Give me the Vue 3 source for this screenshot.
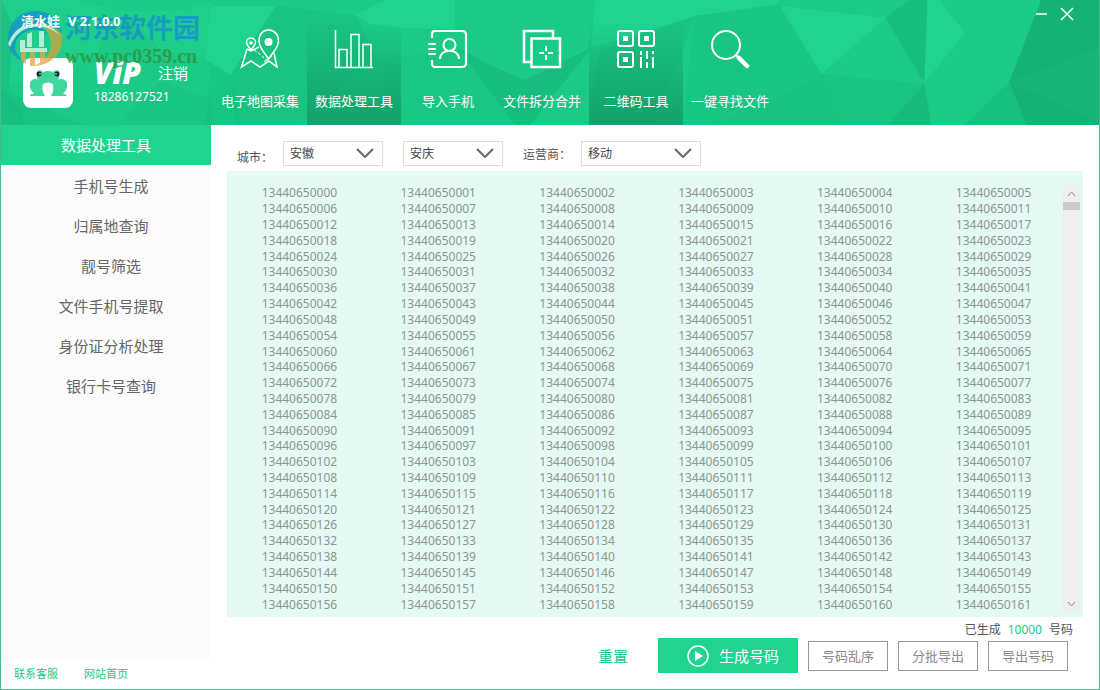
<script setup>
import { ref } from 'vue'

const tabs = [
  { id: 'map', label: '电子地图采集' },
  { id: 'chart', label: '数据处理工具', shaded: true },
  { id: 'contact', label: '导入手机' },
  { id: 'split', label: '文件拆分合并' },
  { id: 'qr', label: '二维码工具', shaded: true },
  { id: 'search', label: '一键寻找文件' },
]
const menu = ['手机号生成', '归属地查询', '靓号筛选', '文件手机号提取', '身份证分析处理', '银行卡号查询']
const province = ref('安徽')
const city = ref('安庆')
const carrier = ref('移动')
const rows = Array.from({ length: 27 }, (_, r) =>
  Array.from({ length: 6 }, (_, c) => 13440650000 + r * 6 + c)
)
</script>

<template>
  <div class="window">
    <header class="header">
      <svg class="facets" viewBox="0 0 1100 125" preserveAspectRatio="none" aria-hidden="true">
        <rect width="1100" height="125" fill="#1bca86" />
        <g fill="#20d490">
          <path d="M0 0H75L125 12 90 60 0 88Z" opacity=".5" />
          <path d="M125 12 185 10 212 0V60L160 50Z" opacity=".5" />
          <path d="M210 6 275 6 230 75 205 60Z" />
          <path d="M355 15 385 0H455V30L405 28 370 24Z" />
          <path d="M595 0H780L776 5 695 16 591 48Z" />
          <path d="M780 6 886 18 822 74Z" />
          <path d="M928 0H940L966 33 925 83Z" />
        </g>
        <g fill="#17b97c">
          <path d="M0 0 12 25 8 90 0 88Z" opacity=".6" />
          <path d="M0 88 20 108 24 125H0Z" opacity=".7" />
          <path d="M24 125 0 88 83 125Z" opacity=".4" />
          <path d="M118 125 160 80 212 100V125Z" opacity=".3" />
          <path d="M275 6 355 15 375 55 300 125H235L230 75Z" opacity=".4" />
          <path d="M210 62 230 75 240 125H205Z" opacity=".3" />
          <path d="M458 48 490 65 525 80 591 48 550 100 530 125H515Z" opacity=".8" />
          <path d="M458 48 515 125H400L375 60Z" opacity=".2" />
          <path d="M695 16 776 5 780 6 822 74 780 98 712 125H683Z" opacity=".3" />
          <path d="M695 16 680 60 650 125H589L600 50Z" opacity=".4" />
          <path d="M822 74 780 98 712 125H842Z" opacity=".5" />
          <path d="M822 74 925 84 888 125H842Z" opacity=".4" />
          <path d="M925 84 888 125H932Z" />
          <path d="M886 18 910 0H928L925 83Z" opacity=".8" />
          <path d="M1010 82 965 125H1027Z" opacity=".6" />
        </g>
        <path d="M1042 0H1100V125H1027L1010 82Z" fill="#16b275" />
        <path d="M1010 82 1100 48V122Z" fill="#17b678" />
      </svg>

      <div class="account">
        <svg class="avatar" viewBox="0 0 50 50" aria-hidden="true">
          <rect width="50" height="50" rx="8" fill="#fff" />
          <g fill="#3fd79b">
            <path d="M14 17C13 12 18 11 20 14Q25 12 30 14C33 11 38 12 36 17Q37 25 25 25Q13 25 14 17Z" />
            <path d="M17 22Q9 19 7 25Q6 31 11 36H8L7 38H19L20 30ZM34 22Q42 19 44 25Q45 31 40 36H42L44 38H32L30 30Z" />
            <path d="M16 23H35L33 38H17Z" />
          </g>
          <path d="M20 26Q25 23 30 26Q31 33 28 38H22Q18 32 20 26Z" fill="#fff" />
          <circle cx="16" cy="16" r="2.500" fill="#223" />
          <circle cx="34" cy="16" r="2.500" fill="#223" />
          <circle cx="17" cy="16" r=".8" fill="#fff" />
          <circle cx="33" cy="16" r=".8" fill="#fff" />
          <path d="M23 17v1M27 17v1" stroke="#269c6c" />
        </svg>
        <div class="identity">
          <div class="rank"><span class="vip">ViP</span><button class="logout">注销</button></div>
          <div class="phone">18286127521</div>
        </div>
      </div>

      <div class="stamp" aria-hidden="true">
        <svg class="orb" viewBox="0 0 60 60">
          <path d="M3 30C5 12 16 3 31 3C46 3 55 12 57 25C48 16 37 13 27 16C15 19 9 26 6 35Q3 33 3 30Z" fill="#168fd0" />
          <path d="M57 27C59 46 46 57 28 58C42 53 48 43 45 29Q42 21 36 17Q50 17 57 27Z" fill="#d5a23b" />
          <path d="M3 37C6 24 16 16 29 17Q38 18 43 27Q33 19 22 23Q10 28 10 41Q12 48 20 54Q7 50 3 37Z" fill="#168fd0" />
          <path d="M3 36Q10 17 28 16Q46 15 55 27Q43 17 28 19Q12 21 5 39Z" fill="#e8f8ef" />
          <path d="M22 26 27 24V39H22ZM34 23H39V39H34ZM15 32H20V40H42V44H15Z" fill="#e8f8ef" />
          <path d="M16 44H21V56L16 52ZM25 44H30V58H25ZM35 44H40V55L35 57Z" fill="#f0a14a" />
        </svg>
        <div class="stamp-text">
          <div class="stamp-name">河东软件园</div>
          <div class="stamp-url">www.pc0359.cn</div>
        </div>
      </div>
      <div class="version"><span>清水娃</span><span>V 2.1.0.0</span></div>

      <nav class="tabs">
        <button v-for="t in tabs" :key="t.id" class="tab" :class="{ shaded: t.shaded }">
          <svg class="tab-icon" viewBox="0 0 40 40" fill="none" stroke="#fff" stroke-width="1.500" aria-hidden="true">
            <template v-if="t.id === 'map'">
              <path d="M28.500 30C25 24 19 19 19 12C19 5 23 1 28.500 1S38.500 5 38.500 12C38.500 19 32 24 28.500 30Z" />
              <circle cx="28.500" cy="13" r="4" fill="#fff" stroke="none" />
              <path d="M11 21C9 18 6.500 16 6.500 13.500A4.500 4.500 0 0 1 15.500 13.500C15.500 16 13 18 11 21Z" />
              <circle cx="11" cy="14" r="1.800" fill="#fff" stroke="none" />
              <path d="M7 20 1.500 38 11 32 20 38 29 32 37 38 34 24M7 20 11 22 19 18" />
              <path d="M14 21 20 25 25 30 30 34" stroke-dasharray="3 2" stroke-width="1" />
              <path d="M24 33 32 27" stroke-width="1" />
            </template>
            <template v-else-if="t.id === 'chart'">
              <path d="M1.500 1V38.500H39M5 38V20.500H13V38M17 38V5.500H25V38M29 38V15.500H37V38" />
            </template>
            <template v-else-if="t.id === 'contact'">
              <path d="M4 9V5Q4 2 7 2H34Q38 2 38 6V34Q38 38 34 38H7Q4 38 4 34V31" stroke-width="2.200" />
              <path d="M1 15H7M1 20H7M1 25H7" stroke-width="2" stroke-linecap="round" />
              <circle cx="21.500" cy="16" r="6" stroke-width="2" />
              <path d="M12 30C12 19 31 19 31 30" stroke-width="2" />
            </template>
            <template v-else-if="t.id === 'split'">
              <path d="M9 33H2V2H31V9M9.500 9.500H38V38H9.500Z" stroke-width="2.500" />
              <path d="M24 17V22M24 26V31M17 24H22M26 24H31" stroke-width="2" />
            </template>
            <template v-else-if="t.id === 'qr'">
              <g stroke-width="2">
                <rect x="2" y="2" width="15" height="15" rx="2" />
                <rect x="23" y="2" width="15" height="15" rx="2" />
                <rect x="2" y="23" width="15" height="15" rx="2" />
              </g>
              <path d="M7 7h5v5H7zM28 7h5v5h-5zM7 28h5v5H7z" fill="#fff" stroke="none" />
              <path d="M25 22V26M25 28V39M31 22V30M31 33V39M37 22V25M37 28V39" stroke-width="2" />
            </template>
            <template v-else>
              <circle cx="16" cy="16" r="14" stroke-width="2" />
              <path d="M26 26 29 29" stroke-width="2" />
              <path d="M29 29 37 37" stroke-width="4.500" stroke-linecap="round" />
            </template>
          </svg>
          <span>{{ t.label }}</span>
        </button>
      </nav>

      <div class="controls">
        <button class="control" aria-label="最小化">
          <svg viewBox="0 0 14 14"><path d="M1 7H12" stroke="#fff" stroke-width="1.500" /></svg>
        </button>
        <button class="control" aria-label="关闭">
          <svg viewBox="0 0 14 14"><path d="M1 1 13 13M13 1 1 13" stroke="#fff" stroke-width="1.500" /></svg>
        </button>
      </div>
    </header>

    <div class="body">
      <aside class="sidebar">
        <nav class="menu">
          <h2 class="menu-title">数据处理工具</h2>
          <button v-for="m in menu" :key="m" class="menu-item">{{ m }}</button>
        </nav>
        <footer class="links">
          <a href="#service">联系客服</a>
          <a href="#home">网站首页</a>
        </footer>
      </aside>

      <main class="main">
        <div class="filters">
          <label class="city-label" for="province">城市：</label>
          <span class="picker">
            <select id="province" v-model="province"><option>安徽</option></select>
            <svg viewBox="0 0 18 10" aria-hidden="true"><path d="M1 1 9 9 17 1" /></svg>
          </span>
          <span class="picker">
            <select id="city" v-model="city" aria-label="城市"><option>安庆</option></select>
            <svg viewBox="0 0 18 10" aria-hidden="true"><path d="M1 1 9 9 17 1" /></svg>
          </span>
          <label class="carrier-label" for="carrier">运营商：</label>
          <span class="picker wide">
            <select id="carrier" v-model="carrier"><option>移动</option></select>
            <svg viewBox="0 0 18 10" aria-hidden="true"><path d="M1 1 9 9 17 1" /></svg>
          </span>
        </div>

        <section class="results">
          <table class="numbers">
            <tbody>
              <tr v-for="(row, i) in rows" :key="i">
                <td v-for="n in row" :key="n">{{ n }}</td>
              </tr>
            </tbody>
          </table>
          <div class="scrollbar">
            <button class="arrow" aria-label="向上滚动">
              <svg viewBox="0 0 9 6"><path d="M1 5 4.500 1 8 5" /></svg>
            </button>
            <div class="thumb"></div>
            <button class="arrow down" aria-label="向下滚动">
              <svg viewBox="0 0 9 6"><path d="M1 1 4.500 5 8 1" /></svg>
            </button>
          </div>
        </section>

        <div class="summary">已生成<strong>10000</strong>号码</div>
        <div class="actions">
          <button class="reset">重置</button>
          <button class="generate">
            <svg viewBox="0 0 22 22" aria-hidden="true">
              <circle cx="11" cy="11" r="10" fill="none" stroke="#fff" stroke-width="1.500" />
              <path d="M8 6 16 11 8 16Z" fill="#fff" />
            </svg>
            <span>生成号码</span>
          </button>
          <button class="outline">号码乱序</button>
          <button class="outline">分批导出</button>
          <button class="outline">导出号码</button>
        </div>
      </main>
    </div>
  </div>
</template>

<style>
body {
  margin: 0;
}
</style>

<style scoped>
.window,
.window * {
  box-sizing: border-box;
}
.window {
  display: flex;
  flex-direction: column;
  min-height: 100vh;
  border: 1px solid #45b98f;
  border-top: 0;
  background: #fff;
  color: #555;
  font-family: "Noto Sans", "Noto Sans CJK SC", sans-serif;
  font-size: 12px;
}
button {
  margin: 0;
  padding: 0;
  border: 0;
  background: none;
  color: inherit;
  font: inherit;
  cursor: pointer;
}
.header {
  position: relative;
  display: flex;
  height: 125px;
  color: #fff;
}
.facets {
  position: absolute;
  inset: 0;
  width: 100%;
  height: 100%;
}
.account {
  position: relative;
  display: flex;
  gap: 21px;
  width: 212px;
  padding: 58px 0 0 22px;
}
.avatar {
  width: 50px;
  height: 50px;
}
.rank {
  display: flex;
  align-items: center;
  gap: 14px;
  height: 30px;
}
.vip {
  width: 50px;
  font: italic 800 30px/30px "Open Sans", sans-serif;
}
.logout {
  font-size: 15px;
  line-height: 30px;
}
.phone {
  line-height: 18px;
}
.version {
  position: absolute;
  top: 12px;
  left: 20px;
  display: flex;
  gap: 8px;
  font-size: 13px;
  font-weight: 700;
  line-height: 18px;
}
.stamp {
  position: absolute;
  top: 8px;
  left: 4px;
  display: flex;
  opacity: 0.75;
  pointer-events: none;
}
.orb {
  width: 60px;
  height: 60px;
}
.stamp-name {
  color: #178bd2;
  font-size: 27px;
  font-weight: 700;
  line-height: 40px;
}
.stamp-url {
  color: #2f8f3a;
  font: 700 20px/16px "Liberation Serif", serif;
}
.tabs {
  position: relative;
  display: flex;
}
.tab {
  display: flex;
  flex-direction: column;
  align-items: center;
  gap: 22px;
  width: 94px;
  padding-top: 29px;
  font-size: 13px;
  line-height: 20px;
  white-space: nowrap;
}
.tab.shaded {
  background: linear-gradient(transparent 20px, #12a26a);
}
.tab-icon {
  width: 40px;
  height: 40px;
}
.controls {
  position: relative;
  display: flex;
  align-items: flex-start;
  gap: 11px;
  margin-left: auto;
  padding: 7px 25px 0 0;
}
.control {
  width: 14px;
  height: 14px;
}
.control svg {
  display: block;
}
.body {
  display: flex;
  flex: 1;
}
.sidebar {
  display: flex;
  flex-direction: column;
  width: 210px;
}
.menu {
  display: flex;
  flex: 1;
  flex-direction: column;
  background: #fbfbfb;
}
.menu-title {
  margin: 0 0 1px;
  background: #20d490;
  color: #fff;
  font-size: 15px;
  font-weight: 400;
  line-height: 40px;
  text-align: center;
}
.menu-item {
  height: 40px;
  padding-left: 10px;
  color: #666;
  font-size: 15px;
  line-height: 40px;
}
.links {
  display: flex;
  gap: 26px;
  padding: 6px 13px;
  font-size: 11px;
  line-height: 18px;
}
.links a {
  color: #20c98a;
  text-decoration: none;
}
.main {
  display: flex;
  flex: 1;
  flex-direction: column;
  padding: 0 16px;
}
.filters {
  display: flex;
  align-items: center;
  height: 46px;
  padding: 11px 0 0 10px;
}
.city-label {
  width: 46px;
  padding-top: 6px;
}
.carrier-label {
  width: 58px;
}
.picker {
  position: relative;
  width: 100px;
  height: 25px;
  margin-right: 20px;
}
.picker.wide {
  width: 120px;
}
.picker select {
  width: 100%;
  height: 100%;
  padding: 0 6px;
  appearance: none;
  border: 1px solid #ddd;
  border-radius: 0;
  background: #fff;
  color: #444;
  font: inherit;
}
.picker svg {
  position: absolute;
  top: 7px;
  right: 9px;
  width: 18px;
  height: 10px;
  fill: none;
  stroke: #666;
  stroke-width: 2;
  pointer-events: none;
}
.results {
  display: flex;
  flex: 1;
  padding: 14px 3px 5px;
  background: #e6faf4;
}
.numbers {
  flex: 1;
  border-collapse: collapse;
  table-layout: fixed;
  color: #8b9692;
  line-height: 15px;
  text-align: center;
}
.numbers td {
  padding: 0;
}
.scrollbar {
  display: flex;
  flex-direction: column;
  width: 17px;
  background: #efefef;
}
.arrow {
  display: flex;
  align-items: center;
  justify-content: center;
  height: 17px;
}
.arrow.down {
  margin-top: auto;
}
.arrow svg {
  width: 9px;
  height: 6px;
  fill: none;
  stroke: #888;
}
.thumb {
  height: 8px;
  background: #cbcbcb;
}
.summary {
  height: 21px;
  padding: 4px 10px 0 0;
  line-height: 18px;
  text-align: right;
}
.summary strong {
  margin: 0 7px;
  color: #20c98a;
  font-weight: 400;
}
.actions {
  display: flex;
  align-items: center;
  justify-content: flex-end;
  gap: 10px;
  padding: 0 15px 16px 0;
}
.reset {
  margin-right: 20px;
  color: #20c98a;
  font-size: 15px;
}
.generate {
  display: flex;
  align-items: center;
  justify-content: center;
  gap: 10px;
  width: 140px;
  height: 35px;
  padding-left: 10px;
  background: #20d490;
  color: #fff;
  font-size: 15px;
}
.generate svg {
  width: 22px;
  height: 22px;
}
.outline {
  width: 80px;
  height: 30px;
  border: 1px solid #999;
  color: #888;
  font-size: 13px;
}
</style>
